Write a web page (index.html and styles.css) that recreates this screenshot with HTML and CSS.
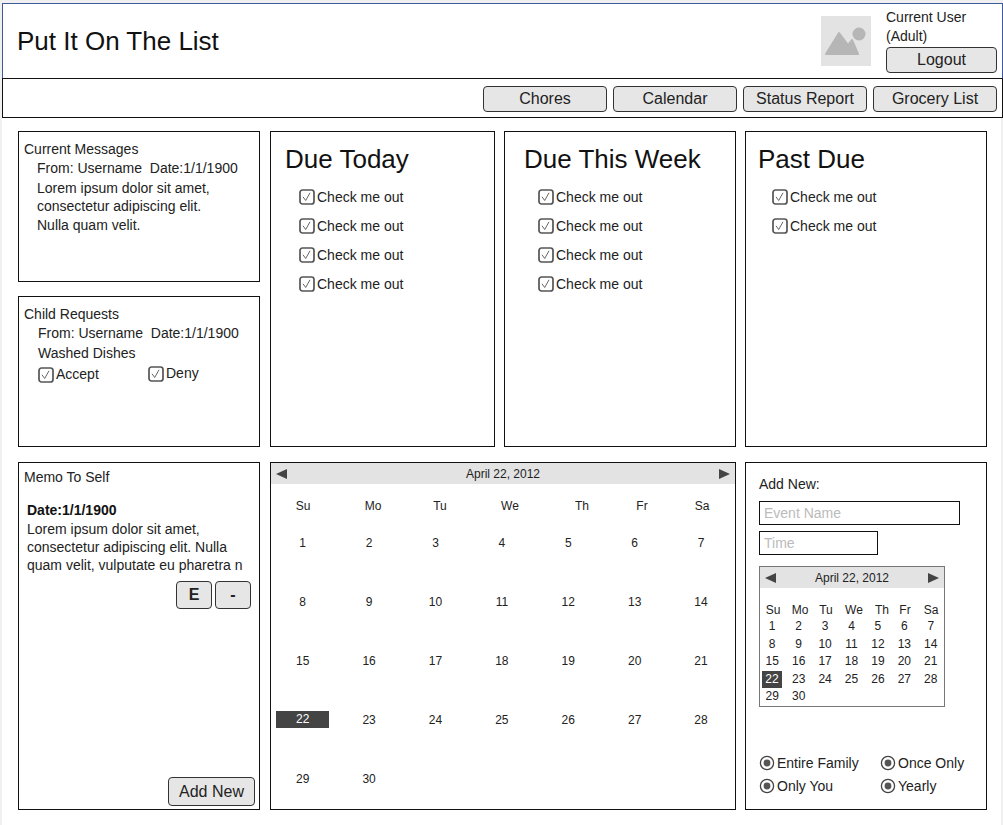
FILE: index.html
```html
<!DOCTYPE html>
<html lang="en">
<head>
<meta charset="UTF-8">
<title>Put It On The List</title>
<link rel="stylesheet" href="styles.css">
</head>
<body>
<svg class="defs" width="0" height="0">
	<symbol id="check" viewBox="0 0 16 16">
		<rect x="1" y="1" width="14" height="14" rx="2.5" fill="#fff" stroke="#555" stroke-width="1.7"/>
		<path d="M4 7.8 L6.7 11.5 L11 3.8" fill="none" stroke="#555" stroke-width="0.9"/>
	</symbol>
	<symbol id="radio" viewBox="0 0 16 16">
		<circle cx="8" cy="8" r="6.6" fill="#fff" stroke="#444" stroke-width="1.3"/>
		<circle cx="8" cy="8" r="3.4" fill="#555"/>
	</symbol>
</svg>

<header class="top">
	<h1>Put It On The List</h1>
	<div class="user">
		<svg class="avatar" viewBox="0 0 50 50" width="50" height="50">
			<rect width="50" height="50" fill="#e3e3e3"/>
			<circle cx="38" cy="18" r="6.5" fill="#b6b6b6"/>
			<path d="M5 38 L18 17 L27 29 L31 24 L37 38 Z" fill="#b6b6b6" stroke="#b6b6b6" stroke-width="2" stroke-linejoin="round"/>
		</svg>
		<div class="user-info">
			<div>Current User</div>
			<div>(Adult)</div>
			<button class="btn logout">Logout</button>
		</div>
	</div>
</header>

<nav class="nav">
	<button class="btn">Chores</button>
	<button class="btn">Calendar</button>
	<button class="btn">Status Report</button>
	<button class="btn">Grocery List</button>
</nav>

<main class="board">
	<div class="side">
		<section class="panel small">
			<div class="title">Current Messages</div>
			<div class="line ind13">From: Username  Date:1/1/1900</div>
			<div class="copy ind13">Lorem ipsum dolor sit amet,<br>consectetur adipiscing elit.<br>Nulla quam velit.</div>
		</section>
		<section class="panel small">
			<div class="title">Child Requests</div>
			<div class="line ind14">From: Username  Date:1/1/1900</div>
			<div class="line ind14">Washed Dishes</div>
			<div class="answers ind14">
				<label class="opt accept"><svg class="ico"><use href="#check"/></svg>Accept</label>
				<label class="opt deny"><svg class="ico"><use href="#check"/></svg>Deny</label>
			</div>
		</section>
	</div>

	<section class="panel due today">
		<h2>Due Today</h2>
		<label class="opt"><svg class="ico"><use href="#check"/></svg>Check me out</label>
		<label class="opt"><svg class="ico"><use href="#check"/></svg>Check me out</label>
		<label class="opt"><svg class="ico"><use href="#check"/></svg>Check me out</label>
		<label class="opt"><svg class="ico"><use href="#check"/></svg>Check me out</label>
	</section>
	<section class="panel due week">
		<h2>Due This Week</h2>
		<label class="opt"><svg class="ico"><use href="#check"/></svg>Check me out</label>
		<label class="opt"><svg class="ico"><use href="#check"/></svg>Check me out</label>
		<label class="opt"><svg class="ico"><use href="#check"/></svg>Check me out</label>
		<label class="opt"><svg class="ico"><use href="#check"/></svg>Check me out</label>
	</section>
	<section class="panel due past">
		<h2>Past Due</h2>
		<label class="opt"><svg class="ico"><use href="#check"/></svg>Check me out</label>
		<label class="opt"><svg class="ico"><use href="#check"/></svg>Check me out</label>
	</section>

	<section class="panel memo">
		<div class="title">Memo To Self</div>
		<div class="memo-text">
			<b>Date:1/1/1900</b>
			Lorem ipsum dolor sit amet,<br>consectetur adipiscing elit. Nulla<br>quam velit, vulputate eu pharetra n
		</div>
		<div class="memo-btns">
			<button class="btn square"><b>E</b></button>
			<button class="btn square"><b>-</b></button>
		</div>
		<button class="btn add">Add New</button>
	</section>

	<section class="panel cal big">
		<div class="cal-bar"><i class="arrow left"></i><span>April 22, 2012</span><i class="arrow right"></i></div>
		<div class="cal-head">
			<span>Su</span><span>Mo</span><span>Tu</span><span>We</span><span>Th</span><span>Fr</span><span>Sa</span>
		</div>
		<div class="cal-days">
			<span>1</span><span>2</span><span>3</span><span>4</span><span>5</span><span>6</span><span>7</span>
			<span>8</span><span>9</span><span>10</span><span>11</span><span>12</span><span>13</span><span>14</span>
			<span>15</span><span>16</span><span>17</span><span>18</span><span>19</span><span>20</span><span>21</span>
			<span><em>22</em></span><span>23</span><span>24</span><span>25</span><span>26</span><span>27</span><span>28</span>
			<span>29</span><span>30</span>
		</div>
	</section>

	<section class="panel addnew">
		<div class="addnew-title">Add New:</div>
		<input class="field name" type="text" placeholder="Event Name">
		<input class="field time" type="text" placeholder="Time">
		<div class="cal mini">
			<div class="cal-bar"><i class="arrow left"></i><span>April 22, 2012</span><i class="arrow right"></i></div>
			<div class="cal-head">
				<span>Su</span><span>Mo</span><span>Tu</span><span>We</span><span>Th</span><span>Fr</span><span>Sa</span>
			</div>
			<div class="cal-days">
				<span>1</span><span>2</span><span>3</span><span>4</span><span>5</span><span>6</span><span>7</span>
				<span>8</span><span>9</span><span>10</span><span>11</span><span>12</span><span>13</span><span>14</span>
				<span>15</span><span>16</span><span>17</span><span>18</span><span>19</span><span>20</span><span>21</span>
				<span><em>22</em></span><span>23</span><span>24</span><span>25</span><span>26</span><span>27</span><span>28</span>
				<span>29</span><span>30</span>
			</div>
		</div>
		<div class="radios">
			<label class="opt"><svg class="ico"><use href="#radio"/></svg>Entire Family</label>
			<label class="opt"><svg class="ico"><use href="#radio"/></svg>Once Only</label>
			<label class="opt"><svg class="ico"><use href="#radio"/></svg>Only You</label>
			<label class="opt"><svg class="ico"><use href="#radio"/></svg>Yearly</label>
		</div>
	</section>
</main>
</body>
</html>
```

FILE: styles.css
```css
*{margin:0;padding:0;box-sizing:border-box;}
html,body{height:100%;}
body{
	display:flex;
	flex-direction:column;
	background:#f0f0f0;
	color:#222;
	font-family:"Liberation Sans",Arial,sans-serif;
	font-size:14px;
	padding-top:3px;
	overflow:hidden;
}
.defs{position:absolute;}

.btn{
	font-family:inherit;
	font-size:16px;
	color:#222;
	background:#e6e6e6;
	border:1px solid #333;
	border-radius:4px;
}

/* header */
.top{
	display:flex;
	justify-content:space-between;
	align-items:center;
	height:76px;
	margin-left:2px;
	border:1px solid #3f5a9c;
	background:#fff;
	padding:0 5px 0 14px;
}
.top h1{font-size:26px;font-weight:normal;color:#111;}
.user{display:flex;gap:15px;align-items:center;}
.avatar{display:block;}
.user-info{width:111px;line-height:19px;padding-top:1px;padding-bottom:2px;}
.logout{display:block;width:111px;height:26px;margin-top:1px;}

.nav{
	display:flex;
	justify-content:flex-end;
	gap:6px;
	height:40px;
	margin-left:2px;
	margin-top:-1px;
	border:1px solid #111;
	background:#fff;
	padding:7px 5px 0 0;
}
.nav .btn{width:124px;height:26px;}

/* main grid */
.board{
	flex:1;
	display:grid;
	grid-template-columns:242px 226px 232px 242px;
	grid-template-rows:316px 348px;
	column-gap:9px;
	row-gap:15px;
	margin:0 2px;
	background:#fff;
	padding:13px 0 0 16px;
}
.panel{border:1px solid #111;background:#fff;}
.side{display:flex;flex-direction:column;gap:14px;}
.small{height:151px;padding:8px 5px;line-height:19px;}
.title{line-height:19px;}
.line{white-space:pre;line-height:19.5px;}
.ind13{padding-left:13px;}
.ind14{padding-left:14px;}
.copy{line-height:18.5px;}

.opt{display:flex;align-items:center;height:19px;color:#222;}
.ico{width:16px;height:16px;margin-right:2px;flex:none;}

.answers{display:flex;margin-top:2px;}
.accept{width:110px;}
.deny{margin-top:-1px;}

/* due columns */
.today{margin-left:1px;}
.due h2{font-size:26px;font-weight:normal;color:#111;line-height:30px;margin-bottom:8px;}
.due{padding-top:12px;}
.due .opt{height:29px;}
.today{padding-left:14px;}
.today .opt{padding-left:14px;}
.week{padding-left:19px;}
.week .opt{padding-left:14px;}
.past{padding-left:12px;}
.past .opt{padding-left:14px;}

/* memo */
.memo{display:flex;flex-direction:column;padding:5px 4px 3px 5px;}
.memo-text{padding-left:3px;margin-top:14px;line-height:18px;white-space:nowrap;}
.memo-text b{display:block;color:#111;margin-bottom:1px;}
.memo-btns{display:flex;justify-content:flex-end;gap:3px;margin-top:7px;margin-right:4px;}
.square{width:36px;height:28px;}
.add{align-self:flex-end;width:87px;height:29px;margin-top:auto;}

/* calendars */
.big{grid-column:span 2;margin-left:1px;font-size:12px;}
.cal-bar{
	display:flex;
	justify-content:space-between;
	align-items:center;
	background:#e3e3e3;
	height:21px;
	padding:0 5px;
}
.arrow{display:block;width:0;height:0;border-top:5.5px solid transparent;border-bottom:5.5px solid transparent;}
.arrow.left{border-right:11px solid #444;}
.arrow.right{border-left:11px solid #444;}
.cal-head{display:grid;text-align:center;}
.cal-days{display:grid;text-align:center;}
.cal-days em{font-style:normal;background:#444;color:#fff;display:block;}

.big .cal-head{grid-template-columns:64px 76px 58px 82px 62px 58px 62px;padding-top:15px;line-height:14px;height:29px;}
.big .cal-days{grid-template-columns:repeat(7,66.4px);grid-auto-rows:59px;align-items:center;margin-left:-1.5px;}
.big .cal-days em{width:53px;height:17px;line-height:17px;margin:0 auto;}

.addnew{padding:12px 13px 0;display:flex;flex-direction:column;}
.addnew-title{line-height:19px;}
.field{
	display:block;
	height:24px;
	border:1px solid #111;
	font-family:inherit;
	font-size:14px;
	padding:0 4px;
	outline:none;
	background:#fff;
}
.field::placeholder{color:#bbb;opacity:1;}
.name{width:201px;margin-top:7px;}
.time{width:119px;margin-top:6px;}

.mini{width:186px;height:141px;border:1px solid #777;margin-top:11px;font-size:12px;}
.mini .cal-bar{height:21px;}
.mini .cal-head{grid-template-columns:26px 28px 24px 32px 24px 22px 30px;margin-top:14px;line-height:16px;}
.mini .cal-days{grid-template-columns:repeat(7,1fr);grid-auto-rows:17.5px;line-height:17px;margin-left:-1px;}
.mini .cal-days em{width:20px;margin-left:3px;}

.radios{display:grid;grid-template-columns:121px 1fr;row-gap:4px;margin-top:46px;}
```
